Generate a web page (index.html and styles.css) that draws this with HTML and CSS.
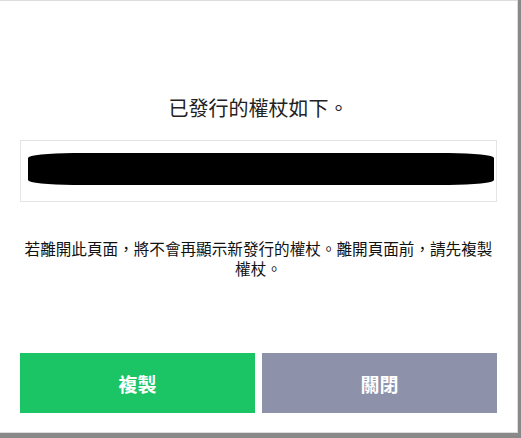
FILE: index.html
```html
<!DOCTYPE html>
<html lang="zh-Hant">
<head>
<meta charset="UTF-8" />
<meta name="viewport" content="width=device-width, initial-scale=1" />
<title>權杖</title>
<link rel="stylesheet" href="styles.css">
</head>
<body>
  <div class="dialog">
    <h2 class="title">已發行的權杖如下。</h2>

    <!-- token (masked) -->
    <div class="token-box">
      <div class="token-mask"></div>
    </div>

    <p class="notice">若離開此頁面，將不會再顯示新發行的權杖。離開頁面前，請先複製<span class="keep">權杖。</span></p>

    <div class="actions">
      <button type="button" class="btn btn-copy">複製</button>
      <button type="button" class="btn btn-close">關閉</button>
    </div>
  </div>
</body>
</html>
```

FILE: styles.css
```css
:root {
  --verde: #1bc464;
  --cinza: #8e91aa;
  --borda: #e4e4e4;
  --fundo: #898989;
}
body {
  margin: 0;
  padding: 0;
  background-color: var(--fundo);
  font-family: "Noto Sans CJK JP", "Noto Sans CJK TC", sans-serif;
  height: 438px;
  overflow: hidden;
}
.dialog {
  box-sizing: border-box;
  width: 518px;
  height: 433px;
  background-color: #fff;
  border: 1px solid #dcdcdc;
  border-left: none;
  padding: 0 20px 0 20px;
  display: flex;
  flex-direction: column;
}
.title {
  margin: 93px 0 18px;
  font-size: 20px;
  line-height: 28px;
  font-weight: normal;
  color: #222;
  text-align: center;
}
.token-box {
  box-sizing: border-box;
  height: 62px;
  border: 1px solid var(--borda);
  padding: 12px 2px 0 7px;
}
.token-mask {
  height: 32px;
  background-color: #000;
  border-radius: 45px / 5px;
}
.notice {
  margin: 36px -4px 0;
  font-size: 15.6px;
  line-height: 20px;
  color: #111;
  text-align: center;
}
.notice .keep {
  white-space: nowrap;
}
.actions {
  display: flex;
  gap: 7px;
  margin-top: auto;
  margin-bottom: 19px;
}
.btn {
  flex: 1;
  height: 60px;
  border: none;
  font-family: inherit;
  font-size: 19px;
  font-weight: bold;
  color: #fff;
  cursor: pointer;
}
.btn-copy {
  background-color: var(--verde);
}
.btn-close {
  background-color: var(--cinza);
}
```
